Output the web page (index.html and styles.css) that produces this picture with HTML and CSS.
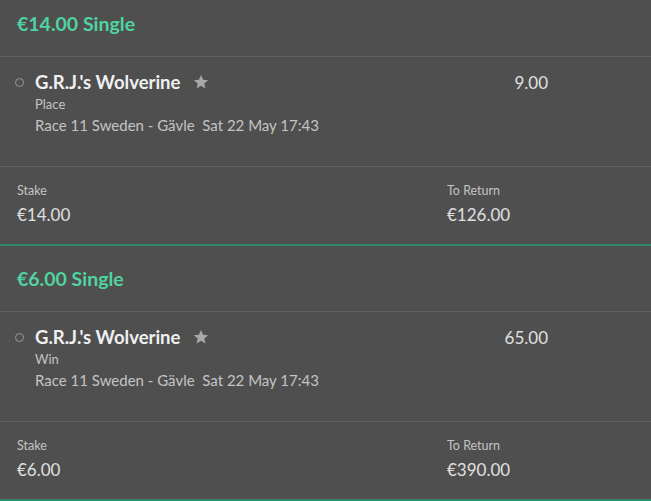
FILE: index.html
```html
<!DOCTYPE html>
<html lang="en">
<head>
    <meta charset="UTF-8">
    <title>Bet Slip</title>
    <link rel="stylesheet" href="styles.css">
</head>
<body>

    <div class="slip">
        <div class="bet">
            <div class="bet-title">€14.00 Single</div>
            <div class="selection">
                <div class="sel-row">
                    <span class="radio"></span>
                    <span class="runner">G.R.J.'s Wolverine</span>
                    <svg class="star" viewBox="0 0 24 24" width="16" height="16"><path d="M12 1.5l3.1 7.1 7.6.6-5.8 5 1.8 7.5L12 17.7l-6.7 4 1.8-7.5-5.8-5 7.6-.6z"/></svg>
                    <span class="odds">9.00</span>
                </div>
                <div class="market">Place</div>
                <div class="event">Race 11 Sweden - Gävle &nbsp;Sat 22 May 17:43</div>
            </div>
            <div class="totals">
                <div class="total">
                    <div class="total-label">Stake</div>
                    <div class="total-value">€14.00</div>
                </div>
                <div class="total">
                    <div class="total-label">To Return</div>
                    <div class="total-value">€126.00</div>
                </div>
            </div>
        </div>

        <div class="bet">
            <div class="bet-title">€6.00 Single</div>
            <div class="selection">
                <div class="sel-row">
                    <span class="radio"></span>
                    <span class="runner">G.R.J.'s Wolverine</span>
                    <svg class="star" viewBox="0 0 24 24" width="16" height="16"><path d="M12 1.5l3.1 7.1 7.6.6-5.8 5 1.8 7.5L12 17.7l-6.7 4 1.8-7.5-5.8-5 7.6-.6z"/></svg>
                    <span class="odds">65.00</span>
                </div>
                <div class="market">Win</div>
                <div class="event">Race 11 Sweden - Gävle &nbsp;Sat 22 May 17:43</div>
            </div>
            <div class="totals">
                <div class="total">
                    <div class="total-label">Stake</div>
                    <div class="total-value">€6.00</div>
                </div>
                <div class="total">
                    <div class="total-label">To Return</div>
                    <div class="total-value">€390.00</div>
                </div>
            </div>
        </div>
    </div>

</body>
</html>
```

FILE: styles.css
```css
html, body {
    margin: 0;
    padding: 0;
    background-color: #4f4f4f;
    overflow: hidden;
}

body {
    font-family: Lato, "Noto Sans", sans-serif;
    color: #e6e6e6;
}

.slip {
    margin-top: -9px;
}

.bet {
    border-bottom: 2px solid #2f8a6b;
}

.bet-title {
    height: 66px;
    box-sizing: border-box;
    padding: 21px 17px 0;
    font-size: 19.5px;
    font-weight: bold;
    line-height: 24px;
    color: #4fd3a1;
    border-bottom: 1px solid #5f5f5f;
}

.selection {
    height: 110px;
    box-sizing: border-box;
    padding: 14px 0 0 35px;
    border-bottom: 1px solid #5f5f5f;
}

.sel-row {
    display: flex;
    align-items: center;
    position: relative;
    height: 22px;
}

.radio {
    position: absolute;
    left: -20px;
    top: 7px;
    width: 7px;
    height: 7px;
    border: 1px solid #9a9a9a;
    border-radius: 50%;
}

.runner {
    font-size: 18.5px;
    font-weight: bold;
    color: #f0f0f0;
}

.star {
    fill: #a8a8a8;
    margin-left: 13px;
}

.odds {
    margin-left: auto;
    width: 100px;
    margin-right: 103px;
    text-align: right;
    font-size: 17px;
    color: #e0e0e0;
}

.market {
    margin-top: 3px;
    font-size: 13px;
    line-height: 16px;
    color: #c4c4c4;
}

.event {
    margin-top: 3px;
    font-size: 15px;
    line-height: 20px;
    color: #c4c4c4;
}

.totals {
    height: 77px;
    box-sizing: border-box;
    padding: 15px 17px 0;
    display: grid;
    grid-template-columns: 430px 1fr;
}

.total-label {
    font-size: 12.5px;
    line-height: 17px;
    color: #c4c4c4;
}

.total-value {
    margin-top: 4px;
    font-size: 17px;
    line-height: 24px;
    color: #e0e0e0;
}
```
